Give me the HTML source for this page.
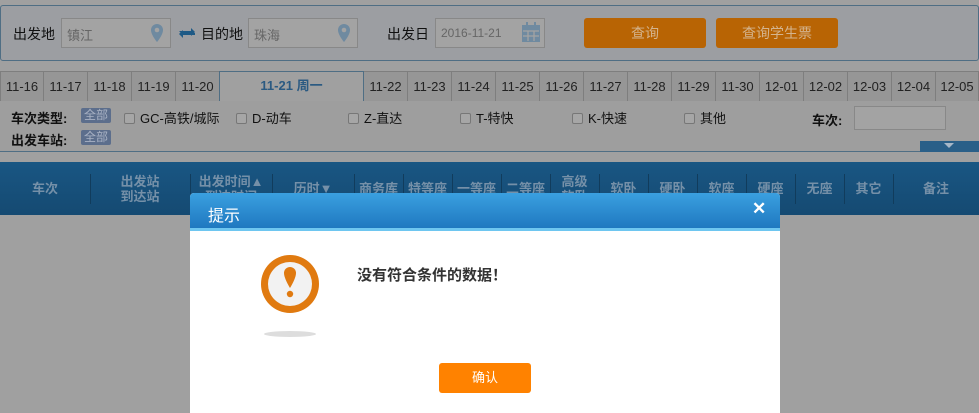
<!DOCTYPE html>
<html><head><meta charset="utf-8"><style>
*{margin:0;padding:0;box-sizing:border-box}
body{width:979px;height:413px;overflow:hidden;background:#a0a0a0;font-family:"Liberation Sans","Noto Sans CJK SC",sans-serif;position:relative}
.a{position:absolute}
.panel{left:0;top:5px;width:979px;height:56px;border:1px solid #4f6e84;border-radius:3px;background:#9c9ea2}
.lbl{font-size:14px;color:#111;top:24px}
.inp{top:18px;height:30px;border:1px solid #888;background:#a3a3a3;font-size:13px;color:#666;padding:6px 5px}
.btn{top:18px;height:30px;border-radius:3px;background:#b86404;color:#d4b48e;font-size:14px;text-align:center;line-height:30px}
.tabs{top:71px;left:0;width:979px;height:30px;border-bottom:1px solid #4f6e84}
.tab{top:0;height:30px;border-right:1px solid #7e7e7e;border-top:1px solid #7e7e7e;background:#969696;font-size:13px;color:#222;text-align:center;line-height:30px}
.act{background:#a0a0a0;border:1px solid #4f6e84;border-bottom:none;color:#2b5a82;font-weight:bold;height:31px}
.filter{top:101px;left:0;width:979px;height:51px;border-bottom:1px solid #4f6e84;background:#9e9e9e}
.f{font-size:13px;color:#111}
.b{font-weight:bold}
.all{background:#5c6e8c;color:#a9b2c4;font-size:12px;padding:0 3px;height:15px;line-height:15px;border-radius:2px}
.cb{width:11px;height:11px;border:1px solid #777;background:#a6a6a6;border-radius:2px;display:inline-block;vertical-align:-1px;margin-right:5px}
.thead{top:162px;left:0;width:979px;height:53px;background:linear-gradient(#195683,#154a72)}
.th{top:0;height:53px;color:#7590a8;font-size:13px;font-weight:bold;text-align:center;display:flex;align-items:center;justify-content:center;line-height:15px}
.dv{top:12px;width:1px;height:30px;background:#113c5c}
.modal{left:190px;top:193px;width:590px;height:220px;background:#fff;border-radius:4px 4px 0 0;overflow:hidden}
.mh{left:0;top:0;width:590px;height:38px;background:linear-gradient(#3aa0e0,#1f78c0);border-bottom:3px solid #6ec6f0}
</style></head><body>
<div class="a panel"></div>
<div class="a lbl" style="left:13px">出发地</div>
<div class="a inp" style="left:61px;width:110px">镇江</div>
<svg class="a" style="left:149px;top:23px" width="16" height="20"><path d="M8 1a6 6 0 0 0-6 6c0 5 6 12 6 12s6-7 6-12a6 6 0 0 0-6-6z" fill="#6f8aa0"/><circle cx="8" cy="7" r="2.3" fill="#a3a3a3"/></svg>
<svg class="a" style="left:178px;top:25px" width="18" height="16"><path d="M1 6h12V3l4 4-4 4V8H3z M17 10H5v3l-4-4 4-4v3h12z" fill="#1e5a86"/></svg>
<div class="a lbl" style="left:201px">目的地</div>
<div class="a inp" style="left:248px;width:110px">珠海</div>
<svg class="a" style="left:336px;top:23px" width="16" height="20"><path d="M8 1a6 6 0 0 0-6 6c0 5 6 12 6 12s6-7 6-12a6 6 0 0 0-6-6z" fill="#6f8aa0"/><circle cx="8" cy="7" r="2.3" fill="#a3a3a3"/></svg>
<div class="a lbl" style="left:387px">出发日</div>
<div class="a inp" style="left:435px;width:110px;font-size:12px;padding-top:7px">2016-11-21</div>
<svg class="a" style="left:521px;top:22px" width="20" height="21"><rect x="1" y="3" width="18" height="17" fill="#6f8aa0"/><path d="M2 9h16M2 14h16M7 9v10M13 9v10" stroke="#a3a3a3" stroke-width="1.3"/><rect x="5" y="0" width="2" height="5" fill="#6f8aa0"/><rect x="13" y="0" width="2" height="5" fill="#6f8aa0"/></svg>
<div class="a btn" style="left:584px;width:122px">查询</div>
<div class="a btn" style="left:716px;width:122px">查询学生票</div>

<div class="a tabs">
<div class="a tab" style="left:0;width:44px;border-left:1px solid #7e7e7e">11-16</div>
<div class="a tab" style="left:44px;width:44px">11-17</div>
<div class="a tab" style="left:88px;width:44px">11-18</div>
<div class="a tab" style="left:132px;width:44px">11-19</div>
<div class="a tab" style="left:176px;width:44px">11-20</div>
<div class="a tab act" style="left:219px;width:145px;line-height:28px">11-21 周一</div>
<div class="a tab" style="left:364px;width:44px">11-22</div>
<div class="a tab" style="left:408px;width:44px">11-23</div>
<div class="a tab" style="left:452px;width:44px">11-24</div>
<div class="a tab" style="left:496px;width:44px">11-25</div>
<div class="a tab" style="left:540px;width:44px">11-26</div>
<div class="a tab" style="left:584px;width:44px">11-27</div>
<div class="a tab" style="left:628px;width:44px">11-28</div>
<div class="a tab" style="left:672px;width:44px">11-29</div>
<div class="a tab" style="left:716px;width:44px">11-30</div>
<div class="a tab" style="left:760px;width:44px">12-01</div>
<div class="a tab" style="left:804px;width:44px">12-02</div>
<div class="a tab" style="left:848px;width:44px">12-03</div>
<div class="a tab" style="left:892px;width:44px">12-04</div>
<div class="a tab" style="left:936px;width:43px">12-05</div>
</div>

<div class="a filter"></div>
<div class="a f b" style="left:11px;top:108px">车次类型:</div>
<div class="a all" style="left:81px;top:108px">全部</div>
<div class="a f" style="left:124px;top:108px"><span class="cb"></span>GC-高铁/城际</div>
<div class="a f" style="left:236px;top:108px"><span class="cb"></span>D-动车</div>
<div class="a f" style="left:348px;top:108px"><span class="cb"></span>Z-直达</div>
<div class="a f" style="left:460px;top:108px"><span class="cb"></span>T-特快</div>
<div class="a f" style="left:572px;top:108px"><span class="cb"></span>K-快速</div>
<div class="a f" style="left:684px;top:108px"><span class="cb"></span>其他</div>
<div class="a f b" style="left:812px;top:110px">车次:</div>
<div class="a" style="left:854px;top:106px;width:92px;height:24px;border:1px solid #888;background:#a3a3a3"></div>
<div class="a f b" style="left:11px;top:130px">出发车站:</div>
<div class="a all" style="left:81px;top:130px">全部</div>
<div class="a" style="left:920px;top:141px;width:59px;height:11px;background:#2a5f88"></div>
<div class="a" style="left:944px;top:143px;width:0;height:0;border-left:5px solid transparent;border-right:5px solid transparent;border-top:5px solid #a8b8c8"></div>

<div class="a thead">
<div class="a th" style="left:0;width:90px">车次</div><div class="a dv" style="left:90px"></div>
<div class="a th" style="left:90px;width:100px">出发站<br>到达站</div><div class="a dv" style="left:190px"></div>
<div class="a th" style="left:190px;width:82px">出发时间▲<br>到达时间</div><div class="a dv" style="left:272px"></div>
<div class="a th" style="left:272px;width:82px">历时▼</div><div class="a dv" style="left:354px"></div>
<div class="a th" style="left:354px;width:49px">商务库</div><div class="a dv" style="left:403px"></div>
<div class="a th" style="left:403px;width:49px">特等座</div><div class="a dv" style="left:452px"></div>
<div class="a th" style="left:452px;width:49px">一等座</div><div class="a dv" style="left:501px"></div>
<div class="a th" style="left:501px;width:49px">二等座</div><div class="a dv" style="left:550px"></div>
<div class="a th" style="left:550px;width:49px">高级<br>软卧</div><div class="a dv" style="left:599px"></div>
<div class="a th" style="left:599px;width:49px">软卧</div><div class="a dv" style="left:648px"></div>
<div class="a th" style="left:648px;width:49px">硬卧</div><div class="a dv" style="left:697px"></div>
<div class="a th" style="left:697px;width:49px">软座</div><div class="a dv" style="left:746px"></div>
<div class="a th" style="left:746px;width:49px">硬座</div><div class="a dv" style="left:795px"></div>
<div class="a th" style="left:795px;width:49px">无座</div><div class="a dv" style="left:844px"></div>
<div class="a th" style="left:844px;width:49px">其它</div><div class="a dv" style="left:893px"></div>
<div class="a th" style="left:893px;width:86px">备注</div>
</div>

<div class="a modal">
<div class="a mh"></div>
<div class="a" style="left:18px;top:9px;color:#fff;font-size:16px">提示</div>
<div class="a" style="left:562px;top:6px;color:#fff;font-size:17px;font-weight:bold">✕</div>
<svg class="a" style="left:60px;top:55px" width="80" height="95"><ellipse cx="40" cy="86" rx="26" ry="3" fill="#ddd"/><circle cx="40" cy="36" r="29" fill="#e07a10"/><circle cx="40" cy="36" r="22" fill="#f2f2f2"/><path d="M34 25a6 6 0 0 1 12 0c0 4-3 10-6 15c-3-5-6-11-6-15z" fill="#e07a10"/><circle cx="40" cy="46" r="3.2" fill="#e07a10"/></svg>
<div class="a" style="left:167px;top:71px;font-size:15px;font-weight:bold;color:#333">没有符合条件的数据！</div>
<div class="a" style="left:249px;top:170px;width:92px;height:30px;background:#ff8200;border-radius:3px;color:#fff;font-size:13px;text-align:center;line-height:30px">确认</div>
</div>
</body></html>
